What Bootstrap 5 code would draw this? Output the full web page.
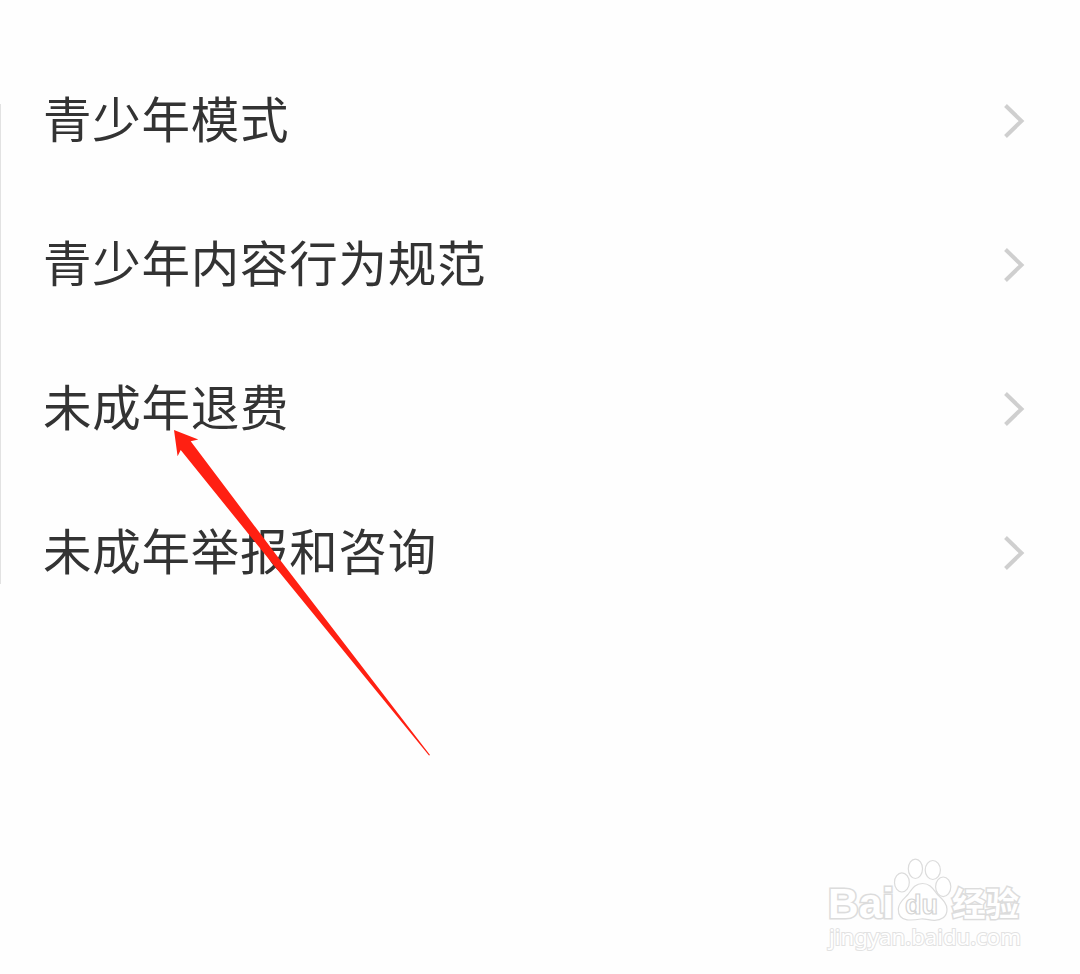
<!DOCTYPE html>
<html lang="zh-CN">
<head>
<meta charset="UTF-8" />
<meta name="viewport" content="width=device-width, initial-scale=1.0"/>
<title>青少年模式</title>
<link href="https://cdn.jsdelivr.net/npm/bootstrap@5.3.0/dist/css/bootstrap.min.css" rel="stylesheet"/>

<style>
body {
background-color: #fefefe;
font-family: "Noto Sans CJK SC", sans-serif;
color: #333;
}

.screen {
height: 974px;
padding-top: 49px;
}

/* thin line on the left edge */
.side-line {
width: 1px;
height: 480px;
margin-top: 55px;
background-color: #e2e2e2;
}

.menu-item {
height: 144px;
padding: 0 54px 0 42px;
font-size: 48.5px;
line-height: 72px;
letter-spacing: 0.75px;
color: #333;
}

.menu-item span {
padding-bottom: 8px;
}

.menu-item svg {
width: 24px;
height: 38px;
}

.arrow {
left: 0;
top: 0;
}

.watermark {
right: 45px;
bottom: 18px;
}
</style>
</head>
<body>
<div class="screen position-relative overflow-hidden d-flex">
<div class="side-line"></div>
<div class="flex-grow-1" id="menuList"></div>

<!-- red pointer over the list -->
<svg class="arrow position-absolute" width="1080" height="974" viewBox="0 0 1080 974">
<path d="M174 430 L198.3 439.6 L190.7 441.2 L280.5 560.5 L430 755 L429 755.5 L280 573 L180.7 450 L177.6 456.3 Z" fill="#ff2012"/>
</svg>

<svg class="watermark position-absolute" width="220" height="106" viewBox="815 850 220 106" fill="#fff" stroke="#dcdcdc" stroke-width="1.2">
<text x="828" y="918" font-family="Liberation Sans, sans-serif" font-weight="bold" font-size="42" textLength="66" lengthAdjust="spacingAndGlyphs" stroke-width="3.2" paint-order="stroke">Bai</text>
<ellipse cx="901.9" cy="882.4" rx="7.4" ry="9.6"/>
<ellipse cx="915.4" cy="868.8" rx="7.1" ry="9.7"/>
<ellipse cx="932.8" cy="870" rx="7.6" ry="9.5"/>
<ellipse cx="943.2" cy="886.8" rx="7.6" ry="9.8"/>
<path d="M922.5 883.5 C930 883.5 933 889 937 894 C942 899 947 903 947 909.5 C947 917 941 920.5 934 920.3 C929 920 925 918.6 921 919 C915 920 911 920.3 907 919.8 C901 919 898.2 915 898.3 909 C898.6 902 904 899 908 894.5 C912 889 915 883.5 922.5 883.5 Z"/>
<text x="905" y="914" font-family="Liberation Sans, sans-serif" font-weight="bold" font-size="27" textLength="33" lengthAdjust="spacingAndGlyphs" stroke="#d4d4d4">du</text>
<text x="952" y="915.5" font-family="Noto Sans CJK SC, sans-serif" font-weight="bold" font-size="33" textLength="67" lengthAdjust="spacingAndGlyphs" stroke-width="3" paint-order="stroke">经验</text>
<text x="829" y="944.5" font-family="Noto Sans, sans-serif" font-size="22" textLength="192" lengthAdjust="spacingAndGlyphs" stroke-width="2" stroke="#e2e2e2" paint-order="stroke">jingyan.baidu.com</text>
</svg>
</div>

<script src="https://cdn.jsdelivr.net/npm/bootstrap@5.3.0/dist/js/bootstrap.bundle.min.js"></script>
<script>
let items = ["青少年模式", "青少年内容行为规范", "未成年退费", "未成年举报和咨询"];

function renderMenu() {
let list = document.getElementById("menuList");
items.forEach(item => {
list.innerHTML += `
<div class="menu-item d-flex align-items-center justify-content-between">
<span>${item}</span>
<svg viewBox="0 0 24 38" fill="none" stroke="#cfcfcf" stroke-width="4">
<path d="M3.5 3.5 L19.5 19 L3.5 34.5"/>
</svg>
</div>
`;
});
}

renderMenu();
</script>
</body>
</html>
